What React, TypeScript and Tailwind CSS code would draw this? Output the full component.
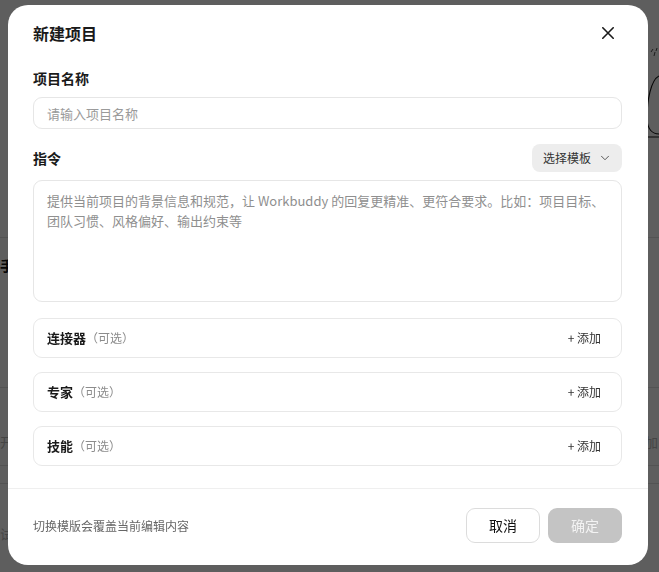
import React from "react";
import { ChevronDown } from "lucide-react";

const font = "font-['Noto_Sans_CJK_SC','Noto_Sans',sans-serif]";

function CloseIcon() {
  return (
    <svg width="12" height="12" viewBox="0 0 12 12" fill="none">
      <path d="M0.8 0.8 11.2 11.2M11.2 0.8 0.8 11.2" stroke="#1a1a1a" strokeWidth="1.6" strokeLinecap="round" />
    </svg>
  );
}

function OptionalRow({ title }: { title: string }) {
  return (
    <div className="h-[40px] flex items-center justify-between border border-[#e8e8e8] rounded-[9px] pl-[13px] pr-[14px]">
      <div className="flex items-baseline">
        <span className="text-[13px] font-bold text-[#1a1a1a]">{title}</span>
        <span className="text-[12px] text-[#8c8c8c]">（可选）</span>
      </div>
      <button className="px-[6px] text-[12px] text-[#333]">+&nbsp;添加</button>
    </div>
  );
}

function Backdrop() {
  // page behind the dialog; only the edges show
  return (
    <div className={`w-full h-[572px] bg-white flex flex-col overflow-hidden ${font}`}>
      <div className="h-[237px] flex justify-end">
        <svg width="14" height="140" viewBox="0 0 14 140">
          <path d="M6 52 l2 -3 M9 56 l1 -4 M11 51 l1 -3" stroke="#222" strokeWidth="0.8" />
          <path d="M14 76 C6 80 2 100 2 118 C2 130 8 134 14 134" stroke="#111" strokeWidth="1.1" fill="none" />
          <line x1="0" y1="137" x2="14" y2="137" stroke="#111" strokeWidth="1" />
        </svg>
      </div>
      <div className="h-[150px] border-t border-[#e2e2e2] pt-[17px]">
        <span className="block text-[14px] font-bold text-[#111]">手册</span>
      </div>
      <div className="h-[78px] border-t border-[#e2e2e2] pt-[44px] flex justify-between">
        <span className="text-[13px] text-[#bbb]">开发</span>
        <span className="mr-[1px] text-[13px] text-[#bbb]">添加</span>
      </div>
      <div className="h-[18px] border-t border-[#e2e2e2]" />
      <div className="flex-1 border-t border-[#e2e2e2] pt-[40px]">
        <span className="block text-[13px] text-[#bbb]">试用</span>
      </div>
    </div>
  );
}

export default function App() {
  return (
    <div className="relative w-[659px] h-[572px] overflow-hidden">
      <Backdrop />
      <div className={`fixed inset-0 bg-black/[0.63] flex items-start pl-[8px] pt-[5px] ${font}`}>
        <div className="w-[640px] h-[560px] bg-white rounded-[20px] flex flex-col">
          <div className="px-[25px] pr-[26px] pt-[16px] pb-[22px] flex flex-col">
            <div className="h-[24px] flex items-center justify-between">
              <h2 className="text-[16px] leading-[24px] font-bold text-[#1a1a1a]">新建项目</h2>
              <button className="w-[28px] h-[28px] flex items-center justify-center">
                <CloseIcon />
              </button>
            </div>

            <label className="mt-[23px] text-[14px] leading-[20px] font-bold text-[#1a1a1a]">项目名称</label>
            <input
              className="mt-[9px] h-[32px] border border-[#e6e6e6] rounded-[9px] px-[13px] text-[13px] outline-none placeholder:text-[#9a9a9a]"
              placeholder="请输入项目名称"
            />

            <div className="mt-[15px] h-[28px] flex items-center justify-between">
              <span className="text-[14px] font-bold text-[#1a1a1a]">指令</span>
              <button className="h-[28px] flex items-center gap-[7px] pl-[11px] pr-[10px] bg-[#ededed] rounded-[8px] text-[12px] text-[#333]">
                选择模板
                <ChevronDown size={14} strokeWidth={1.5} color="#444" />
              </button>
            </div>

            <textarea
              className="mt-[8px] h-[122px] resize-none border border-[#e6e6e6] rounded-[9px] pl-[13px] pr-[10px] pt-[10px] text-[13px] leading-[20px] outline-none placeholder:text-[#8f8f8f]"
              placeholder="提供当前项目的背景信息和规范，让 Workbuddy 的回复更精准、更符合要求。比如：项目目标、团队习惯、风格偏好、输出约束等"
            />

            <div className="mt-[16px] flex flex-col gap-[14px]">
              <OptionalRow title="连接器" />
              <OptionalRow title="专家" />
              <OptionalRow title="技能" />
            </div>
          </div>

          <div className="border-t border-[#efefef] px-[25px] pr-[26px] pt-[19px] pb-[22px] flex items-center justify-between">
            <span className="text-[12px] text-[#666]">切换模版会覆盖当前编辑内容</span>
            <div className="flex gap-[8px]">
              <button className="w-[74px] h-[35px] border border-[#dcdcdc] rounded-[9px] text-[14px] text-[#111]">取消</button>
              <button className="w-[74px] h-[35px] bg-[#c4c4c4] rounded-[9px] text-[14px] text-[#f3f3f3]">确定</button>
            </div>
          </div>
        </div>
      </div>
    </div>
  );
}
